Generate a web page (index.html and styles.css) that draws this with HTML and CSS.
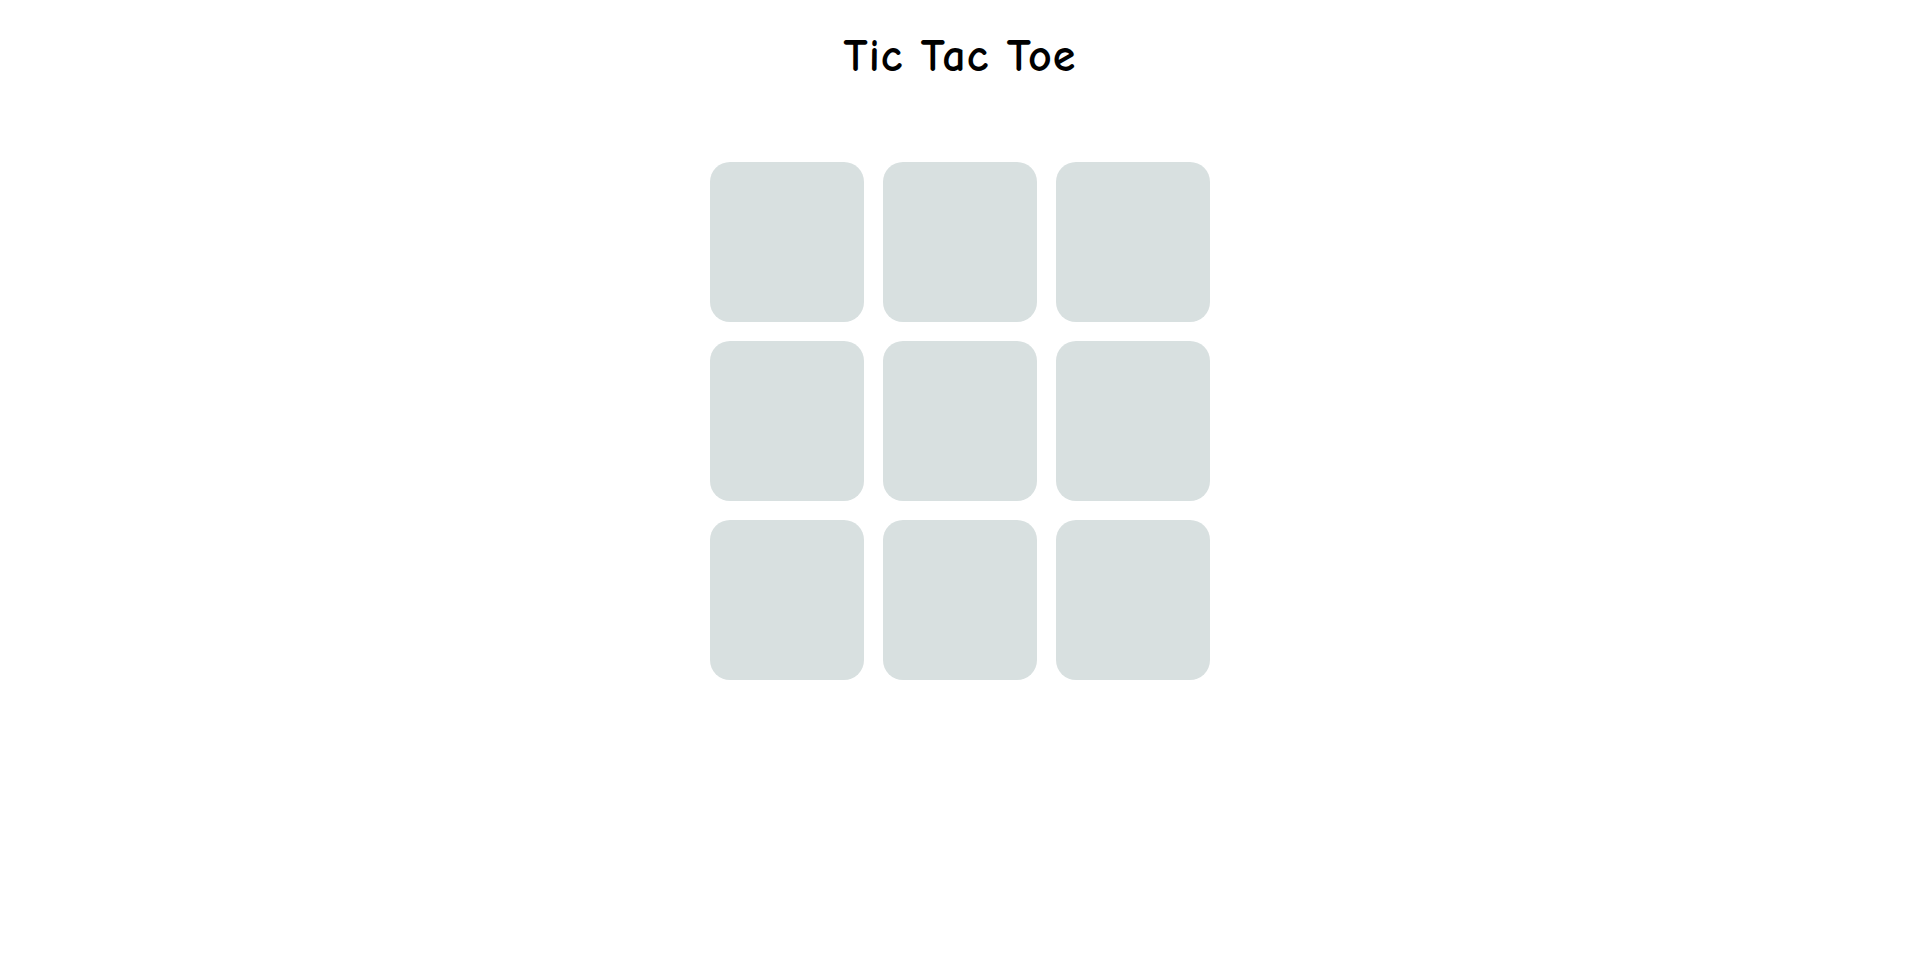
FILE: index.html
```html
<!DOCTYPE html>
<html lang="en">
<head>
<meta charset="utf-8">
<title>Tic Tac Toe</title>
<link rel="stylesheet" href="styles.css">
</head>
<body>
<main class="game">
  <h1 class="title">Tic Tac Toe</h1>
  <div class="board">
    <div class="cell"></div>
    <div class="cell"></div>
    <div class="cell"></div>
    <div class="cell"></div>
    <div class="cell"></div>
    <div class="cell"></div>
    <div class="cell"></div>
    <div class="cell"></div>
    <div class="cell"></div>
  </div>
</main>
</body>
</html>
```

FILE: styles.css
```css
html, body {
  margin: 0;
  padding: 0;
  background: #ffffff;
}

body {
  font-family: "Comic Sans MS", "Comic Neue", "Open Sans", sans-serif;
  color: #000000;
}

.game {
  display: flex;
  flex-direction: column;
  align-items: center;
  padding-left: 2px;
}

.title {
  margin: 34px 0 0;
  font-size: 46px;
  font-weight: bold;
  line-height: 46px;
  letter-spacing: 1px;
}

.board {
  margin-top: 82px;
  display: grid;
  grid-template-columns: repeat(3, 154px);
  grid-template-rows: repeat(3, 160px);
  gap: 19px;
}

.cell {
  background: #d8e0e0;
  border-radius: 20px;
}
```
